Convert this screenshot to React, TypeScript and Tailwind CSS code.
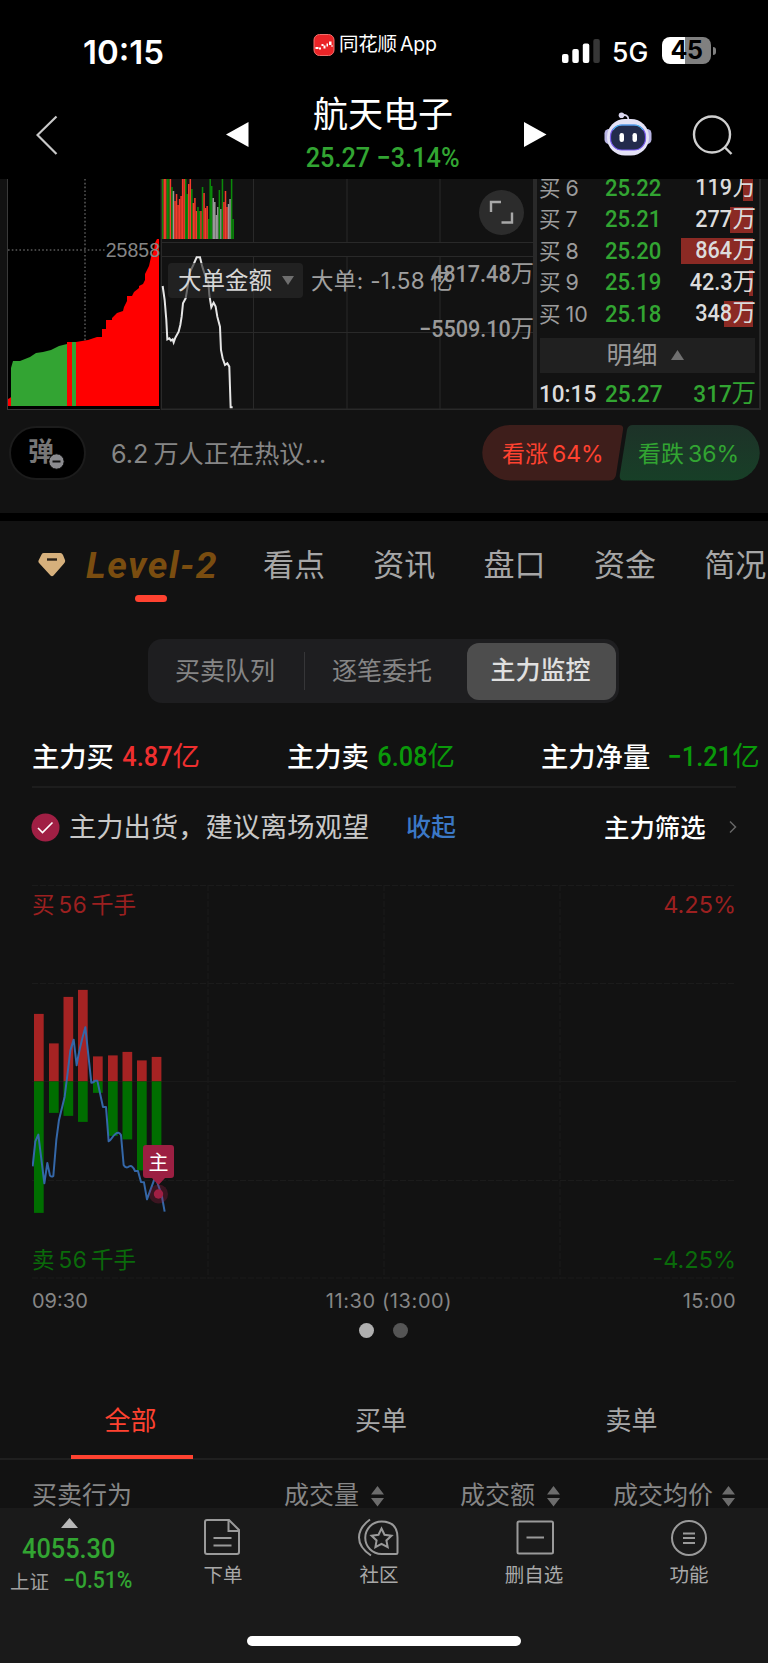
import { ReactNode } from 'react'
import clsx from 'clsx'

const CJK = "font-['Inter','Noto_Sans_CJK_SC',sans-serif]"
const DIN = "font-['Roboto','Noto_Sans_CJK_SC',sans-serif] font-medium"

const bids = [
  { level: '6', price: '25.22', qty: '119', bar: 10 },
  { level: '7', price: '25.21', qty: '277', bar: 23 },
  { level: '8', price: '25.20', qty: '864', bar: 72 },
  { level: '9', price: '25.19', qty: '42.3', bar: 4 },
  { level: '10', price: '25.18', qty: '348', bar: 29 },
]

// r = up, g = down, w = flat
const volumes =
  'g60 r60 r60 g60 g60 r60 g52 w48 r38 r45 r34 r40 r43 r60 r60 g60 g45 r55 r60 g50 r36 r41 r28 g32 g28 r28 g52 r46 r31 r33 g20 g60 g53 w41 w37 w24 w32 g49 w30 g60 r37 r48 r32 w35 w40 g60 g20'
    .split(' ')
    .map(v => ({ kind: v[0], h: Number(v.slice(1)) }))

const volumeColor: Record<string, string> = { r: '#f43b2c', g: '#0a8a0a', w: '#9a9a9a' }

const flowBars = [
  { x: 2, up: 67.5, down: 131.5 },
  { x: 17, up: 38, down: 31.5 },
  { x: 31.5, up: 84.5, down: 34.5 },
  { x: 46, up: 91.5, down: 40.5 },
  { x: 61, up: 25, down: 11.5 },
  { x: 76, up: 26, down: 54.5 },
  { x: 90.5, up: 29.5, down: 58 },
  { x: 105, up: 21, down: 89 },
  { x: 119.7, up: 24.5, down: 84 },
]

// narrow digits, the unit keeps its full width
function Num({ value, unit, className, origin = 'origin-right' }: { value: string; unit?: string; className?: string; origin?: string }) {
  return (
    <span className={clsx(DIN, 'whitespace-nowrap', className)}>
      <span className={clsx('inline-block scale-x-[0.92]', origin)}>{value}</span>
      {unit && <span className="font-normal">{unit}</span>}
    </span>
  )
}

function StatusBar() {
  return (
    <div className="flex h-[90px] items-start pt-[29px]">
      <span className="mt-[4px] ml-[83px] w-[230px] text-[33px] leading-[38px] font-semibold">10:15</span>
      <div className="mt-px flex h-[30px] w-[249px] items-center">
        <svg width="22" height="22" viewBox="0 0 21 22">
          <rect x="0.5" y="0.5" width="20" height="21" rx="5.5" fill="#ea2427" stroke="#f0706c" />
          <path d="M2 13h3v2H2zM5.500 13.500h2v2h-2zM8 10h2v2H8zM10 11.500h2v3h-2zM13 9.500h1.500v3H13zM15.500 7.500h2.500v3.500h-2.500zM18 11h1v2h-1z" fill="#fff" />
        </svg>
        <span className="ml-[4px] text-[19.500px] tracking-[-0.01em]">同花顺<span className="ml-[3px]">App</span></span>
      </div>
      <svg width="40" height="24" viewBox="0 0 40 24" className="mt-[10px]">
        <rect x="0" y="15" width="6.500" height="9" rx="2" fill="#fff" />
        <rect x="10.300" y="10" width="6.500" height="14" rx="2" fill="#fff" />
        <rect x="20.800" y="4.500" width="6.500" height="19.500" rx="2" fill="#fff" />
        <rect x="31.300" y="0" width="6.500" height="24" rx="2" fill="#363636" />
      </svg>
      <span className="mt-[6px] ml-[10px] w-[50px] text-[26.500px] leading-[34px] font-medium">5G</span>
      <div className="mt-[8px] flex items-center">
        <div className="flex h-[27px] w-[49px] items-center justify-center rounded-[8px] bg-[linear-gradient(90deg,#fff_46%,#808080_46%)] text-[25px] leading-[27px] font-bold tracking-[-0.02em] text-black">45</div>
        <div className="ml-[2px] h-[8px] w-[3px] rounded-r-full bg-[#808080]" />
      </div>
    </div>
  )
}

function Robot() {
  return (
    <svg width="48" height="44" viewBox="0 0 48 44">
      <path d="M17 3.500q7-2 7.500 4" fill="none" stroke="#d9d6ee" strokeWidth="1.800" />
      <circle cx="17.500" cy="3.200" r="2.800" fill="#d9d6ee" />
      <rect x="0.500" y="17" width="9" height="15" rx="4.500" fill="#b8b4e4" />
      <rect x="38.500" y="17" width="9" height="15" rx="4.500" fill="#b8b4e4" />
      <rect x="3" y="7" width="42" height="36.500" rx="18" fill="#e4e2f6" />
      <rect x="6.500" y="13" width="35" height="25" rx="11.500" fill="#232b4c" stroke="#7a5cf0" strokeWidth="1.200" />
      <path d="M9 18q3-5 9-5h12q6 0 9 5" fill="none" stroke="#44b9e8" strokeWidth="1.100" />
      <rect x="15.500" y="21" width="4.500" height="9" rx="2.200" fill="#fff" />
      <rect x="28.500" y="21" width="4.500" height="9" rx="2.200" fill="#fff" />
    </svg>
  )
}

function Header() {
  return (
    <div className="flex h-[89px] items-start">
      <svg width="22" height="42" viewBox="0 0 22 42" className="mt-[24px] ml-[36px]" fill="none" stroke="#c8c8c8" strokeWidth="2.200">
        <path d="M20.500 2.500 1.500 21l19 19" />
      </svg>
      <svg width="23" height="26" viewBox="0 0 23 26" className="mt-[32px] ml-[168px]" fill="#fff">
        <path d="M0 12.500 22.500 0v25z" />
      </svg>
      <div className="ml-[34px] flex w-[200px] flex-col items-center">
        <h1 className="mt-[4px] text-[35px] leading-[40px]">航天电子</h1>
        <Num value="25.27 −3.14%" origin="origin-center" className="mt-[7px] text-[27.500px] leading-[34px] text-[#32a532]" />
      </div>
      <svg width="23" height="26" viewBox="0 0 23 26" className="mt-[32px] ml-[41px]" fill="#fff">
        <path d="M22.500 12.500 0 0v25z" />
      </svg>
      <div className="mt-[22px] ml-[57px]"><Robot /></div>
      <svg width="42" height="42" viewBox="0 0 42 42" className="mt-[24px] ml-[40px]" fill="none" stroke="#cfcfcf" strokeWidth="2.400">
        <circle cx="20" cy="20.500" r="18" />
        <path d="m32.500 33 7 7" />
      </svg>
    </div>
  )
}

function ChipChart() {
  return (
    <svg width="153" height="231" viewBox="7 179 153 231" className="bg-black">
      <g stroke="#5a5a5a" strokeWidth="1.500" strokeDasharray="1.600 2.200">
        <path d="M85 179v162M8 250h98" />
      </g>
      <path d="M8 406v-7l2-1 1-1v9z" fill="#f00" />
      <path d="M11 406v-38l2-7h7l5-2 5-2 6-4 7-1 8-2 8-4 8-2V406z" fill="#33a433" />
      <path d="M67 406V342h5V406zM76 406V342L88 340 97 337H102V329H106V320H112V318L117 313 123 311 124 307 127 301V296H132L134 292 139 288V286L143 284 145 280V274L149 266 151 257 154 250 155 243 157 239H159V406z" fill="#f00" />
      <path d="M72 406V342h4V406z" fill="#33a433" />
      <path d="M7.500 179v231M7 409.500h153" stroke="#3a3a3a" />
      <text x="160" y="257" textAnchor="end" fontFamily="Liberation Sans" fontSize="19.500" fill="#858585">25858</text>
    </svg>
  )
}

function TrendChart() {
  return (
    <div className="relative h-[231px] w-[375px]">
      <svg width="375" height="231" viewBox="160 179 375 231">
        <g stroke="#292929" fill="none">
          <path d="M161.500 179v231M253.500 179v63M347 179v63M440 179v63M253.500 256v153M347 256v153M440 256v153M161 332.500h373" />
          <path d="M161 409.500h373M534 179v231" strokeWidth="2" />
          <path d="M161 242.500h373M161 256.500h373" />
        </g>
        {volumes.map((v, i) => (
          <rect key={i} x={162 + i * 1.53} y={239 - v.h} width="1.530" height={v.h} fill={volumeColor[v.kind]} />
        ))}
        <path
          transform="translate(0 170) scale(.3333)"
          d="M488 348L494 390 499 450 502 508 508 505 513 512 518 508 521 517 526 503 536 485 541 465 545 440 549 400 557 385 563 350 568 310 580 285 590 262H600L607 290 615 315 625 335 628 375 634 412 641 398 647 410 652 440 660 470 663 540 668 565 675 585 682 580 688 590 692 712H698"
          fill="none" stroke="#e6e6e6" strokeWidth="6"
        />
      </svg>
      <div className="absolute top-[11px] left-[319px] flex size-[45px] items-center justify-center rounded-full bg-[#2c2c2c]">
        <svg width="25" height="25" viewBox="0 0 25 25" fill="none" stroke="#a8a8a8" strokeWidth="2.400">
          <path d="M2 12V2h10M23 12.500v10H12.500" />
        </svg>
      </div>
      <div className="absolute top-[84px] left-[8px] flex h-[35px] w-[135px] items-center rounded-[4px] bg-[#2a2a2a]/65 pl-[10px] text-[23.500px] text-[#d6d6d6]">
        大单金额
        <svg width="12" height="9" viewBox="0 0 12 9" className="ml-[10px]" fill="#6e6e6e"><path d="M0 0h12L6 9z" /></svg>
      </div>
      <span className="absolute top-[84px] left-[151px] text-[22.500px] leading-[35px] tracking-[0.015em] whitespace-nowrap text-[#a0a0a0]">大单: -1.58<span className="ml-[5px]">亿</span></span>
      <Num value="4817.48" unit="万" className="absolute top-[79px] right-[1px] text-[23.500px] leading-[32px] text-[#9a9a9a]" />
      <Num value="−5509.10" unit="万" className="absolute top-[134px] right-[1px] text-[23.500px] leading-[32px] text-[#9a9a9a]" />
    </div>
  )
}

function OrderBook() {
  return (
    <div className="h-[231px] w-[226px] border-x-2 border-b-2 border-[#292929] pr-[4px] pl-[2px]">
      <div className="-mt-[7px]">
        {bids.map(b => (
          <div key={b.level} className="relative flex h-[31.500px] items-center">
            <div className="absolute top-[3px] right-[2px] h-[26px] bg-[#8b2a24]" style={{ width: b.bar }} />
            <span className="w-[66px] text-[21.500px] text-[#9c9c9c]">买<span className="ml-[5px]">{b.level}</span></span>
            <Num value={b.price} origin="origin-left" className="text-[24px] text-[#32a532]" />
            <Num value={b.qty} unit="万" className="relative -mr-px ml-auto text-[23.500px] text-[#dcdcdc]" />
          </div>
        ))}
      </div>
      <div className="mt-[8px] ml-px flex h-[35px] items-center justify-center gap-[13px] bg-[#202020] pr-[5px] text-[25.500px] text-[#9a9a9a]">
        明细
        <svg width="13" height="10" viewBox="0 0 13 10" fill="#707070"><path d="M0 10h13L6.500 0z" /></svg>
      </div>
      <div className="mt-[6px] flex h-[32px] items-center text-[24.500px]">
        <Num value="10:15" origin="origin-left" className="w-[66px] text-[#dcdcdc]" />
        <Num value="25.27" origin="origin-left" className="text-[#32a532]" />
        <Num value="317" unit="万" className="-mr-px ml-auto text-[#32a532]" />
      </div>
    </div>
  )
}

function Discussion() {
  return (
    <div className="flex h-[103px] items-start pt-[15px]">
      <div className="relative mt-px ml-[9px] h-[54px] w-[77px] rounded-full border-2 border-[#1c1c1c] bg-black">
        <span className="absolute top-[6px] left-[17px] text-[26px] leading-[36px] font-bold text-[#777]">弹</span>
        <svg width="17" height="17" viewBox="0 0 17 17" className="absolute top-[25px] left-[36.500px]">
          <circle cx="8.500" cy="8.500" r="7.700" fill="#8c8c90" stroke="#000" />
          <path d="M4.500 8.500h8" stroke="#111" strokeWidth="2" />
        </svg>
      </div>
      <span className="mt-[11px] ml-[25px] w-[371px] text-[25.200px] leading-[36px] text-[#868686]">6.2<span className="ml-[5px]">万人正在热议...</span></span>
      <button className="h-[56px] w-[142px] bg-[#3e1e1b] pt-[2px] pl-[20px] text-left text-[23px] text-[#ff4230] [clip-path:path('M28_0H137Q142_0_141_5L134_50Q133_55.5_127_55.5H28A27.75_27.75_0_0_1_28_0Z')]">
        看涨<span className="ml-[4px]">64%</span>
      </button>
      <button className="-ml-[5px] h-[56px] w-[142px] bg-linear-to-b from-[#1d3228] to-[#173f27] pt-[2px] pl-[19px] text-left text-[23px] text-[#32a532] [clip-path:path('M14_0H113A27.75_27.75_0_0_1_113_55.5H5Q0_55.5_0.8_50L8_5Q9_0_14_0Z')]">
        看跌<span className="ml-[4px]">36%</span>
      </button>
    </div>
  )
}

function MainTabs() {
  return (
    <div className="h-[118px] overflow-hidden pt-[21px]">
      <div className="flex h-[46px] items-center">
        <svg width="28" height="24" viewBox="0 0 28 24" className="ml-[38px]">
          <path d="M5.500 0h17Q24 0 25 2l2 5q.6 2-1 3.500L15.500 22.500q-1.500 1.500-3 0L1.500 10.500Q-.3 9 .8 7l2.500-5Q4 0 5.500 0Z" fill="#d6b07c" />
          <path d="M9 6.500h10" stroke="#2a2118" strokeWidth="2.400" />
        </svg>
        <span className="ml-[20px] w-[177px] font-['Roboto',sans-serif] text-[37.500px] font-bold tracking-[0.04em] text-[#7a4d10] italic">Level-2</span>
        <div className="flex gap-[48.300px] text-[31px] whitespace-nowrap text-[#a6a6a6]">
          {['看点', '资讯', '盘口', '资金', '简况'].map(t => <span key={t}>{t}</span>)}
        </div>
      </div>
      <div className="mt-[7px] ml-[135px] h-[7px] w-[32px] rounded-full bg-[#ff4230]" />
    </div>
  )
}

function Segmented() {
  return (
    <div className="ml-[148px] flex h-[64px] w-[471px] items-center rounded-[14px] bg-[#1e1e20] text-[25px] text-[#858585]">
      <span className="w-[156px] pt-[2px] pl-[27px]">买卖队列</span>
      <div className="h-[38px] w-px bg-[#363638]" />
      <span className="w-[162px] pt-[2px] pl-[27px]">逐笔委托</span>
      <div className="flex h-[57px] w-[149px] items-center justify-center rounded-[12px] bg-[#4d4d4d] pr-[2px] font-medium text-[#e0e0e0]">主力监控</div>
    </div>
  )
}

function Stat({ label, value, color, className }: { label: string; value: string; color: string; className?: string }) {
  return (
    <div className={clsx('flex items-center whitespace-nowrap', className)}>
      <span className="text-[27.300px] font-medium text-white">{label}</span>
      <Num value={value} unit="亿" className={clsx('-mt-[4px] text-[27.500px]', color)} />
    </div>
  )
}

function FlowChart() {
  return (
    <div className="relative mt-[35px] ml-[32px] h-[394px] w-[704px]">
      <svg width="704" height="394" viewBox="0 0 704 394">
        <g stroke="#1b1b1b" strokeDasharray="6 2">
          <path d="M0 .5h704M0 98.500h704M0 295.500h704M0 393h704M176 0v394M352 0v394M528 0v394" />
        </g>
        <path d="M0 196.500h704" stroke="#191919" />
        {flowBars.map(b => (
          <g key={b.x}>
            <rect x={b.x} y={196.4 - b.up} width="9.700" height={b.up} fill="#a62323" />
            <rect x={b.x} y="196.400" width="9.700" height={b.down} fill="#006e00" />
          </g>
        ))}
        <path
          transform="translate(-32 75) scale(.3333)"
          d="M98 619L106 544 115 524 133 670 142 609 150 647Q155 652 160 648L169 540 177 480 194 410Q203 340 211 272L221 239 230 316Q238 265 256 202L274 368Q282 368 284 362H292L309 441H318L326 544C335 542 340 518 355 518Q360 520 363 525L371 615Q378 627 388 619 397 615 405 633H414L423 666 432 667 441 718 463 658 470 662 485 705 494 755"
          fill="none" stroke="#3467a8" strokeWidth="6" strokeLinejoin="round"
        />
        <circle cx="126.500" cy="309" r="9.500" fill="#a01f44" fillOpacity=".3" />
        <circle cx="126.500" cy="309" r="4.700" fill="#a01f44" />
        <path d="M114 260h25q3 0 3 3v27q0 3-3 3h-6l-6.500 7-6.500-7h-6q-3 0-3-3v-27q0-3 3-3z" fill="#9c1f42" />
      </svg>
      <span className="absolute top-[264px] left-[116.500px] text-[20px] leading-[28px] text-white">主</span>
      <span className="absolute top-[4px] left-0 text-[22.500px] leading-[32px] text-[#9c2020]">买<span className="mx-[4px] tracking-[0.02em]">56</span>千手</span>
      <span className="absolute top-[4px] right-0 text-[23.500px] leading-[32px] text-[#9c2020]">4.25%</span>
      <span className="absolute bottom-[3px] left-0 text-[22.500px] leading-[32px] text-[#0a6a0a]">卖<span className="mx-[4px] tracking-[0.02em]">56</span>千手</span>
      <span className="absolute right-0 bottom-[3px] text-[23.500px] leading-[32px] text-[#0a6a0a]">-4.25%</span>
    </div>
  )
}

function SortIcon() {
  return (
    <svg width="13" height="21" viewBox="0 0 13 21" fill="#6c6c6c">
      <path d="M0 8.500h13L6.500 0zM0 12h13l-6.500 8.500z" />
    </svg>
  )
}

function NavItem({ label, className, children }: { label: string; className: string; children: ReactNode }) {
  return (
    <div className={clsx('flex flex-col items-center', className)}>
      <svg width="42" height="40" viewBox="0 0 42 40" fill="none" stroke="#9a9a9a" strokeWidth="2">{children}</svg>
      <span className="mt-[4px] text-[19.500px] leading-[28px] whitespace-nowrap text-[#a8a8a8]">{label}</span>
    </div>
  )
}

function BottomBar() {
  return (
    <div className="h-[155px] bg-[#1a1a1a]">
      <div className="flex h-[128px]">
        <div className="flex w-[138px] flex-col items-center">
          <svg width="17" height="10" viewBox="0 0 17 10" className="mt-[10px]" fill="#b8b8b8"><path d="M0 10h17L8.500 0z" /></svg>
          <Num value="4055.30" origin="origin-center" className="mt-[4px] text-[27.500px] leading-[34px] text-[#32a532]" />
          <div className="-mt-px flex w-full items-center pl-[10px]">
            <span className="w-[53px] pt-[3px] text-[19.500px] leading-[28px] text-[#a0a0a0]">上证</span>
            <Num value="−0.51%" origin="origin-left" className="text-[23px] leading-[28px] text-[#32a532]" />
          </div>
        </div>
        <div className="flex pt-[9px]">
          <NavItem label="下单" className="ml-[45px] w-[80px]">
            <path d="M2.500 3h22l10 10v22q0 2-2 2H2.500q-2 0-2-2V5q0-2 2-2ZM24 3v11h10.500M9 21h18M9 28.500h18" transform="translate(2.500 0)" />
          </NavItem>
          <NavItem label="社区" className="ml-[76px] w-[80px]">
            <path d="M12 2.500q-11 8-11 18t12 18M23.500 4.500a16 16 0 1 0 0 32.500h14.700q1.300 0 1.300-1.300V20.500q0-16-16-16Z" />
            <path d="m23.500 11.500 3 6.300 7 .9-5.100 4.700 1.300 6.800-6.200-3.300-6.100 3.300 1.200-6.800-5-4.700 6.900-.9z" />
          </NavItem>
          <NavItem label="删自选" className="ml-[75px] w-[80px]">
            <rect x="4.500" y="4.500" width="35.500" height="32" rx="1.500" />
            <path d="M13.500 20.500h17.500" />
          </NavItem>
          <NavItem label="功能" className="ml-[75px] w-[80px]">
            <circle cx="21" cy="21" r="17" />
            <path d="M15 16.500h12M15 21h12M15 26h12" />
          </NavItem>
        </div>
      </div>
      <div className="mx-auto h-[10px] w-[274px] rounded-full bg-white" />
    </div>
  )
}

export default function App() {
  return (
    <div className={clsx(CJK, 'h-[1663px] w-[768px] overflow-hidden bg-[#121212] text-white')}>
      <div className="h-[179px] bg-black">
        <StatusBar />
        <Header />
      </div>

      <div className="flex h-[231px] overflow-hidden pl-[7px]">
        <ChipChart />
        <TrendChart />
        <OrderBook />
      </div>
      <Discussion />
      <div className="h-[8px] bg-black" />

      <MainTabs />
      <Segmented />

      <div className="flex h-[83px] items-center pt-[28px] pl-[32px]">
        <Stat label="主力买" value="4.87" color="ml-[4px] text-[#ef2f2f]" className="w-[255px]" />
        <Stat label="主力卖" value="6.08" color="ml-[4px] text-[#0a990a]" className="w-[254px]" />
        <Stat label="主力净量" value="−1.21" color="ml-[12px] text-[#0a990a]" />
      </div>
      <div className="ml-[32px] h-[2px] w-[704px] bg-[#1d1d1d]" />

      <div className="mt-[16px] flex h-[46px] items-center pl-[31px] font-medium">
        <svg width="29" height="29" viewBox="0 0 29 29">
          <circle cx="14.500" cy="14.500" r="14" fill="#a01f44" />
          <path d="m7 15 4.500 4.500L21.500 9.500" fill="none" stroke="#fff" strokeWidth="1.600" />
        </svg>
        <span className="ml-[9px] w-[337px] pt-[2px] text-[27.300px] font-normal whitespace-nowrap text-[#c8c8c8]">主力出货，建议离场观望</span>
        <span className="w-[198px] pt-[2px] text-[25px] text-[#3b78c6]">收起</span>
        <span className="w-[125px] pt-[2px] text-[25.400px]">主力筛选</span>
        <svg width="8" height="14" viewBox="0 0 8 14" fill="none" stroke="#666" strokeWidth="1.500"><path d="m1 1.500 5.500 5.500L1 12.500" /></svg>
      </div>

      <FlowChart />
      <div className="mx-[32px] mt-[8px] flex h-[28px] items-center justify-between text-[20px] text-[#868686]">
        <span className="w-[80px]">09:30</span>
        <span className="pl-[10px] tracking-[0.03em]">11:30 (13:00)</span>
        <span className="w-[80px] text-right tracking-[0.02em]">15:00</span>
      </div>
      <div className="mt-[8px] flex justify-center gap-[19px] pr-[2px]">
        <div className="size-[15px] rounded-full bg-[#b0b0b0]" />
        <div className="size-[15px] rounded-full bg-[#555]" />
      </div>

      <div className="mt-[57px] flex h-[65px] border-b-2 border-[#1f1f1f] text-[26px] text-[#a8a8a8]">
        <div className="relative ml-[5px] w-[251px] pt-[6px] text-center text-[#ff4230]">
          全部
          <div className="absolute -bottom-[1px] left-[66px] h-[4px] w-[122px] bg-[#ff4230]" />
        </div>
        <div className="w-[250px] pt-[6px] text-center">买单</div>
        <div className="w-[251px] pt-[6px] text-center">卖单</div>
      </div>
      <div className="flex h-[48px] items-center pt-[24px] pl-[32px] text-[25px] whitespace-nowrap text-[#868686]">
        <span className="w-[252px]">买卖行为</span>
        <span className="flex w-[176px] items-center gap-[12px]">成交量<SortIcon /></span>
        <span className="flex w-[153px] items-center gap-[12px]">成交额<SortIcon /></span>
        <span className="flex items-center gap-[9px]">成交均价<SortIcon /></span>
      </div>

      <BottomBar />
    </div>
  )
}
